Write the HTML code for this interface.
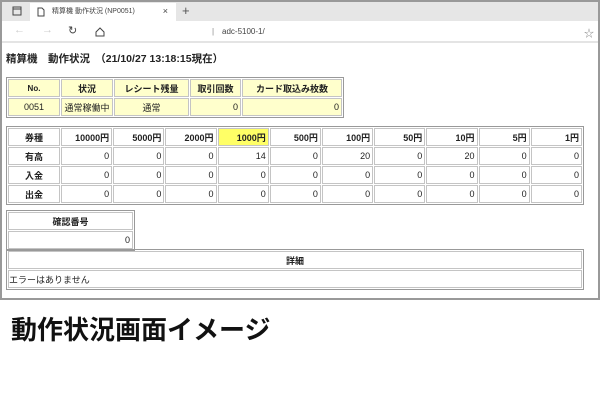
<!DOCTYPE html>
<html><head><meta charset="utf-8"><style>
*{margin:0;padding:0;box-sizing:border-box}
body{width:600px;height:400px;background:#fff;font-family:"Liberation Sans","Noto Sans CJK JP",sans-serif;position:relative;overflow:hidden}
.frame{position:absolute;left:0;top:0;width:600px;height:300px;border:2px solid #999}
.tabbar{position:absolute;left:0;top:0;width:596px;height:19px;background:#e6e6e6}
.tab{position:absolute;left:28px;top:1px;width:146px;height:18px;background:#fff;font-size:7px;color:#444;line-height:17px;padding-left:22px}
.addr{position:absolute;left:0;top:19px;width:596px;height:22px;background:#fff;border-bottom:2px solid #e4e4e4}
.url{position:absolute;left:115px;top:3px;width:470px;height:16px;font-size:8px;color:#444;line-height:16px}
.t{position:absolute;font-size:9px;color:#222}
table{position:absolute;border:1px solid #999;border-spacing:1px;table-layout:fixed;font-size:9px;color:#222}
tr{height:18px}
td{border:1px solid #c4c4c4;padding:0 2px;white-space:nowrap;overflow:hidden}
th{border:1px solid #c4c4c4;font-weight:bold;padding:0 2px}
.y td,.y th{background:#ffffcc}
.r{text-align:right}.c{text-align:center}
.h{font-weight:bold;text-align:right}
</style></head><body>
<div class="frame">
<div class="tabbar">
<svg style="position:absolute;left:10px;top:4px" width="10" height="10"><rect x="1" y="1" width="8" height="8" fill="none" stroke="#444"/><line x1="1" y1="3" x2="9" y2="3" stroke="#444"/></svg>
<div class="tab"><svg style="position:absolute;left:7px;top:4px" width="8" height="10"><path d="M1 1h4l2 2v6H1z" fill="none" stroke="#444"/></svg>精算機 動作状況 (NP0051)<span style="position:absolute;right:8px;font-size:9px">×</span></div>
<span style="position:absolute;left:180px;top:0;font-size:13px;color:#555;line-height:18px">+</span>
</div>
<div class="addr">
<span style="position:absolute;left:12px;top:3px;font-size:11px;color:#ccc">←</span>
<span style="position:absolute;left:40px;top:3px;font-size:11px;color:#ccc">→</span>
<span style="position:absolute;left:66px;top:3px;font-size:11px;color:#444">↻</span>
<svg style="position:absolute;left:93px;top:6px" width="10" height="10"><path d="M1 5L5 1L9 5V9H1z" fill="none" stroke="#444"/></svg>
<div class="url"><span style="position:absolute;left:95px;color:#888">|</span><span style="position:absolute;left:105px">adc-5100-1/</span></div>
<span style="position:absolute;left:582px;top:4px;font-size:10px;color:#888">☆</span>
</div>
<div class="t" style="left:4px;top:49px;font-weight:bold;font-size:10.5px">精算機　動作状況　（21/10/27 13:18:15現在）</div>
<table class="y" style="left:4px;top:75px;width:338px">
<tr><th style="width:52px;font-size:8px">No.</th><th style="width:52px">状況</th><th style="width:75px">レシート残量</th><th style="width:51px">取引回数</th><th>カード取込み枚数</th></tr>
<tr><td class="c">0051</td><td class="c" style="padding:0">通常稼働中</td><td class="c">通常</td><td class="r">0</td><td class="r">0</td></tr>
</table>
<table style="left:4px;top:124px;width:578px">
<tr><th style="width:52px">券種</th><td class="h">10000円</td><td class="h">5000円</td><td class="h">2000円</td><td class="h" style="background:#ffff66">1000円</td><td class="h">500円</td><td class="h">100円</td><td class="h">50円</td><td class="h">10円</td><td class="h">5円</td><td class="h">1円</td></tr>
<tr><th>有高</th><td class="r">0</td><td class="r">0</td><td class="r">0</td><td class="r">14</td><td class="r">0</td><td class="r">20</td><td class="r">0</td><td class="r">20</td><td class="r">0</td><td class="r">0</td></tr>
<tr><th>入金</th><td class="r">0</td><td class="r">0</td><td class="r">0</td><td class="r">0</td><td class="r">0</td><td class="r">0</td><td class="r">0</td><td class="r">0</td><td class="r">0</td><td class="r">0</td></tr>
<tr><th>出金</th><td class="r">0</td><td class="r">0</td><td class="r">0</td><td class="r">0</td><td class="r">0</td><td class="r">0</td><td class="r">0</td><td class="r">0</td><td class="r">0</td><td class="r">0</td></tr>
</table>
<table style="left:4px;top:208px;width:129px">
<tr><th>確認番号</th></tr><tr><td class="r">0</td></tr>
</table>
<table style="left:4px;top:247px;width:578px">
<tr><th>詳細</th></tr><tr><td style="padding:0">エラーはありません</td></tr>
</table>
</div>
<div style="position:absolute;left:11px;top:312px;font-size:26px;font-weight:bold;color:#111;font-family:'Noto Sans CJK JP',sans-serif;line-height:34px">動作状況画面イメージ</div>
</body></html>
